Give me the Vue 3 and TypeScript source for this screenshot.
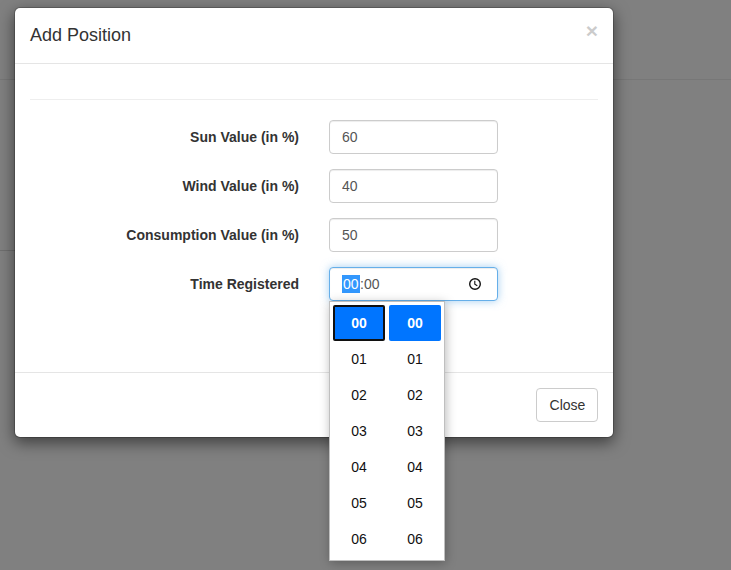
<script setup lang="ts">
import { ref } from 'vue'

interface Field {
  id: string
  label: string
  value: string
}

const fields = ref<Field[]>([
  { id: 'sun', label: 'Sun Value (in %)', value: '60' },
  { id: 'wind', label: 'Wind Value (in %)', value: '40' },
  { id: 'consumption', label: 'Consumption Value (in %)', value: '50' },
])

const options: string[] = ['00', '01', '02', '03', '04', '05', '06']
const hour = ref('00')
const minute = ref('00')
</script>

<template>
  <div class="page">
    <div class="page-band top"></div>
    <div class="page-band middle"></div>
    <div class="modal">
      <header class="modal-header">
        <h4 class="modal-title">Add Position</h4>
        <button type="button" class="dismiss" aria-label="Close">×</button>
      </header>
      <div class="modal-body">
        <hr class="rule" />
        <div v-for="field in fields" :key="field.id" class="row">
          <label class="label" :for="field.id">{{ field.label }}</label>
          <input :id="field.id" v-model="field.value" class="control" type="text" />
        </div>
        <div class="row">
          <span class="label">Time Registered</span>
          <div class="control time">
            <span class="digits"><span class="selected">{{ hour }}</span><span class="colon">:</span><span>{{ minute }}</span></span>
            <svg class="clock" width="14" height="14" viewBox="0 0 14 14" fill="none" stroke="#111">
              <circle cx="7" cy="7" r="5.3" stroke-width="1.4" />
              <path d="M6.8 3.8V7.2L9.3 8.8" stroke-width="1.1" />
            </svg>
            <div class="picker">
              <ul class="column">
                <li v-for="o in options" :key="o" class="option" :class="{ active: o === hour, focused: o === hour }">{{ o }}</li>
              </ul>
              <ul class="column">
                <li v-for="o in options" :key="o" class="option" :class="{ active: o === minute }">{{ o }}</li>
              </ul>
            </div>
          </div>
        </div>
      </div>
      <footer class="modal-footer">
        <button type="button" class="close-button">Close</button>
      </footer>
    </div>
  </div>
</template>

<style>
body {
  margin: 0;
  overflow: hidden;
}
</style>

<style scoped>
.page {
  position: relative;
  box-sizing: border-box;
  width: 731px;
  height: 570px;
  padding: 7px 14px;
  overflow: hidden;
  background: #808080;
  color: #333;
  font: 14px/20px "Liberation Sans", Arial, sans-serif;
}
.page * {
  box-sizing: border-box;
}
.page-band {
  position: absolute;
  left: 0;
  height: 1px;
  background: #777;
}
.page-band.top {
  top: 79px;
  width: 731px;
}
.page-band.middle {
  top: 250px;
  width: 300px;
  background: #6f6f6f;
}
.modal {
  position: relative;
  display: flex;
  flex-direction: column;
  width: 600px;
  height: 431px;
  border: 1px solid rgba(0, 0, 0, 0.2);
  border-radius: 6px;
  background: #fff;
  background-clip: padding-box;
  box-shadow: 0 5px 15px rgba(0, 0, 0, 0.5);
}
.modal-header {
  display: flex;
  justify-content: space-between;
  height: 56px;
  padding: 14px 15px 0;
  border-bottom: 1px solid #e5e5e5;
}
.modal-title {
  margin: 0;
  font-size: 18px;
  font-weight: 500;
  line-height: 26px;
}
.dismiss {
  height: 21px;
  margin: -2px 0 0;
  padding: 0;
  border: 0;
  background: transparent;
  color: #000;
  font: bold 21px/21px "Liberation Sans", Arial, sans-serif;
  text-shadow: 0 1px 0 #fff;
  opacity: 0.2;
}
.modal-body {
  flex: 1;
  padding: 15px;
}
.rule {
  height: 1px;
  margin: 20px 0;
  border: 0;
  background: #eee;
}
.row {
  display: grid;
  grid-template-columns: 269px 169px;
  column-gap: 30px;
  margin-bottom: 15px;
}
.label {
  padding-top: 7px;
  font-weight: 700;
  text-align: right;
}
.control {
  width: 169px;
  height: 34px;
  padding: 6px 12px;
  border: 1px solid #ccc;
  border-radius: 4px;
  outline: 0;
  background: #fff;
  box-shadow: inset 0 1px 1px rgba(0, 0, 0, 0.075);
  color: #555;
  font: 14px/20px "Liberation Sans", Arial, sans-serif;
}
.time {
  position: relative;
  display: flex;
  align-items: center;
  justify-content: space-between;
  padding-right: 15px;
  border-color: #66afe9;
  box-shadow: inset 0 1px 1px rgba(0, 0, 0, 0.075), 0 0 8px rgba(102, 175, 233, 0.6);
}
.digits {
  display: flex;
  align-items: center;
}
.selected {
  width: 18px;
  height: 18px;
  padding-left: 1px;
  background: #3297fd;
  color: #fff;
  line-height: 18px;
}
.colon {
  width: 4px;
}
.picker {
  position: absolute;
  top: 33px;
  left: -1px;
  display: flex;
  gap: 4px;
  width: 116px;
  height: 260px;
  padding: 3px 3px 0;
  border: 1px solid #bfbfbf;
  background: #fff;
  box-shadow: 1px 2px 10px rgba(0, 0, 0, 0.28);
}
.column {
  width: 52px;
  margin: 0;
  padding: 0;
  list-style: none;
}
.option {
  display: flex;
  align-items: center;
  justify-content: center;
  height: 36px;
  border-radius: 2px;
  color: #101010;
}
.option.active {
  background: #0075ff;
  color: #fff;
  font-weight: 700;
}
.option.focused {
  border: 2px solid #101010;
}
.modal-footer {
  display: flex;
  justify-content: flex-end;
  height: 65px;
  padding: 15px;
  border-top: 1px solid #e5e5e5;
}
.close-button {
  width: 62px;
  height: 34px;
  padding: 0 0 0 1px;
  border: 1px solid #ccc;
  border-radius: 4px;
  background: #fff;
  color: #333;
  font: 14px/20px "Liberation Sans", Arial, sans-serif;
}
</style>
